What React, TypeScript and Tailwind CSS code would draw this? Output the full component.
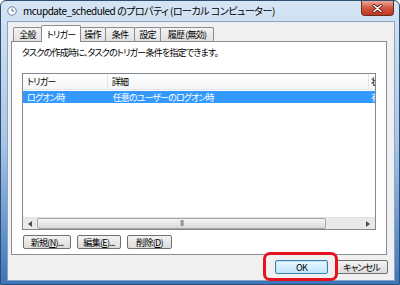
import React from "react";

const tabs = ["全般", "トリガー", "操作", "条件", "設定", "履歴 (無効)"];
const tabWidths = ["w-[29px]", "w-[40px]", "w-[27px]", "w-[30px]", "w-[27px]", "w-[54px]"];

function ClockIcon() {
  return (
    <svg width="10" height="10" viewBox="0 0 10 10">
      <circle cx="5" cy="5" r="4.2" fill="#ffffff" stroke="#5f7f9f" strokeWidth="1" />
      <path d="M5 2.5 V5 H7" fill="none" stroke="#3a4f66" strokeWidth="0.9" />
    </svg>
  );
}

function CloseButton() {
  return (
    <div className="ml-auto mr-[5px] self-start w-[33px] h-[15px] rounded-b-[4px] border border-t-0 border-[#6b2a22] bg-linear-to-b from-[#e9a99b] via-[#d0553f] to-[#c2361d] flex items-center justify-center">
      <svg width="11" height="9" viewBox="0 0 11 9">
        <path d="M2 1.5 L9 7.5 M9 1.5 L2 7.5" stroke="#5a1a12" strokeWidth="3" strokeLinecap="round" />
        <path d="M2 1.5 L9 7.5 M9 1.5 L2 7.5" stroke="#ffffff" strokeWidth="1.6" strokeLinecap="round" />
      </svg>
    </div>
  );
}

function SmallButton({ children, w }: { children: React.ReactNode; w: string }) {
  return (
    <div className={`${w} h-[14px] rounded-[2px] border border-[#707070] bg-linear-to-b from-[#f2f2f2] to-[#dcdcdc] flex items-center justify-center text-[9px] tracking-[-0.7px] leading-none text-black`}>
      {children}
    </div>
  );
}

export default function App() {
  return (
    <div className="relative w-[400px] h-[285px] overflow-hidden font-['Noto_Sans_CJK_JP','Noto_Sans',sans-serif] [font-feature-settings:'palt']">
      <div className="w-full h-full flex flex-col rounded-t-[6px] border border-[#2f4d70] bg-linear-to-b from-[#d6e5f4] via-[#a7c6e6] to-[#3c75bb]">
        {/* Title bar */}
        <div className="h-[20px] flex items-center pl-[6px]">
          <ClockIcon />
          <span className="ml-[6px] text-[10px] leading-none text-black tracking-[-0.5px]">
            mcupdate_scheduled のプロパティ (ローカル コンピューター)
          </span>
          <CloseButton />
        </div>

        {/* Client area */}
        <div className="ml-[6px] mr-[4px] mb-[3px] flex-1 bg-[#f0f0f0] border border-[#8ba4c3] flex flex-col text-[9px] tracking-[-0.8px]">
          <div className="pl-[3px] pr-[7px] pt-[3px]">
            {/* Tabs */}
            <div className="h-[16px] flex items-end pl-[2px]">
              {tabs.map((t, i) =>
                i === 1 ? (
                  <div
                    key={t}
                    className={`${tabWidths[i]} -mx-[1px] h-[17px] -mb-[1px] z-10 bg-white border border-b-0 border-[#898c95] rounded-t-[2px] flex items-center justify-center leading-none text-black`}
                  >
                    {t}
                  </div>
                ) : (
                  <div
                    key={t}
                    className={`${tabWidths[i]} h-[14px] -ml-[1px] first:ml-0 bg-linear-to-b from-[#f3f3f3] to-[#e1e1e1] border border-b-0 border-[#898c95] rounded-t-[2px] flex items-center justify-center leading-none text-black`}
                  >
                    {t}
                  </div>
                )
              )}
            </div>

            {/* Tab page */}
            <div className="h-[214px] bg-white border border-[#898c95] px-[10px] pt-[5px] flex flex-col">
              <div className="leading-[12px] text-black">
                タスクの作成時に、タスクのトリガー条件を指定できます。
              </div>

              {/* List view */}
              <div className="mt-[14px] h-[157px] border border-[#828790] flex flex-col overflow-hidden">
                <div className="h-[16px] flex bg-linear-to-b from-[#ffffff] to-[#f4f5f6] border-b border-[#e2e3e5] leading-none text-black">
                  <div className="w-[85px] border-r border-[#e5e5e5] flex items-center pl-[4px]">トリガー</div>
                  <div className="w-[262px] border-r border-[#e5e5e5] flex items-center pl-[4px]">詳細</div>
                  <div className="w-[6px] overflow-hidden">
                    <div className="h-full flex items-center pl-[2px] whitespace-nowrap">状態</div>
                  </div>
                </div>
                <div className="mt-[1px] h-[12px] flex bg-[#3399ff] text-white leading-none tracking-[-0.9px]">
                  <div className="w-[85px] flex items-center pl-[4px]">ログオン時</div>
                  <div className="w-[262px] flex items-center pl-[5px]">任意のユーザーのログオン時</div>
                  <div className="w-[6px] overflow-hidden">
                    <div className="h-full flex items-center pl-[2px] whitespace-nowrap">有効</div>
                  </div>
                </div>
                <div className="flex-1" />

                {/* Horizontal scrollbar */}
                <div className="h-[12px] flex bg-[#e9e9e9] border-t border-[#e0e0e0]">
                  <div className="w-[14px] flex items-center justify-center">
                    <svg width="4" height="6" viewBox="0 0 4 6">
                      <path d="M4 0 L0 3 L4 6 Z" fill="#4d4d4d" />
                    </svg>
                  </div>
                  <div className="w-[289px] rounded-[2px] border border-[#a6a6a6] bg-linear-to-b from-[#f6f6f6] to-[#dadada] flex items-center justify-center">
                    <span className="text-[7px] leading-none text-[#606060] tracking-[-1px]">III</span>
                  </div>
                  <div className="flex-1" />
                  <div className="w-[14px] flex items-center justify-center">
                    <svg width="4" height="6" viewBox="0 0 4 6">
                      <path d="M0 0 L4 3 L0 6 Z" fill="#4d4d4d" />
                    </svg>
                  </div>
                </div>
              </div>

              {/* Action buttons */}
              <div className="mt-[5px] ml-[1px] flex gap-[6px]">
                <SmallButton w="w-[48px]">
                  新規(<u>N</u>)...
                </SmallButton>
                <SmallButton w="w-[44px]">
                  編集(<u>E</u>)...
                </SmallButton>
                <SmallButton w="w-[45px]">
                  削除(<u>D</u>)
                </SmallButton>
              </div>
            </div>
          </div>

          {/* Dialog buttons */}
          <div className="mt-[5px] pr-[6px] flex justify-end gap-[7px]">
            <div className="w-[53px] h-[14px] rounded-[2px] border border-[#3c7fb1] bg-linear-to-b from-[#eaf6fd] to-[#bee6fd] shadow-[inset_0_0_0_1px_#bfe5fa] flex items-center justify-center leading-none text-black">
              OK
            </div>
            <div className="w-[53px] h-[14px] rounded-[2px] border border-[#707070] bg-linear-to-b from-[#f2f2f2] to-[#dcdcdc] flex items-center justify-center leading-none text-black">
              キャンセル
            </div>
          </div>
        </div>
      </div>

      {/* Red highlight around OK */}
      <div className="absolute left-[263px] top-[252px] w-[75px] h-[29px] rounded-[7px] border-[3px] border-[#e3141f]" />
    </div>
  );
}
